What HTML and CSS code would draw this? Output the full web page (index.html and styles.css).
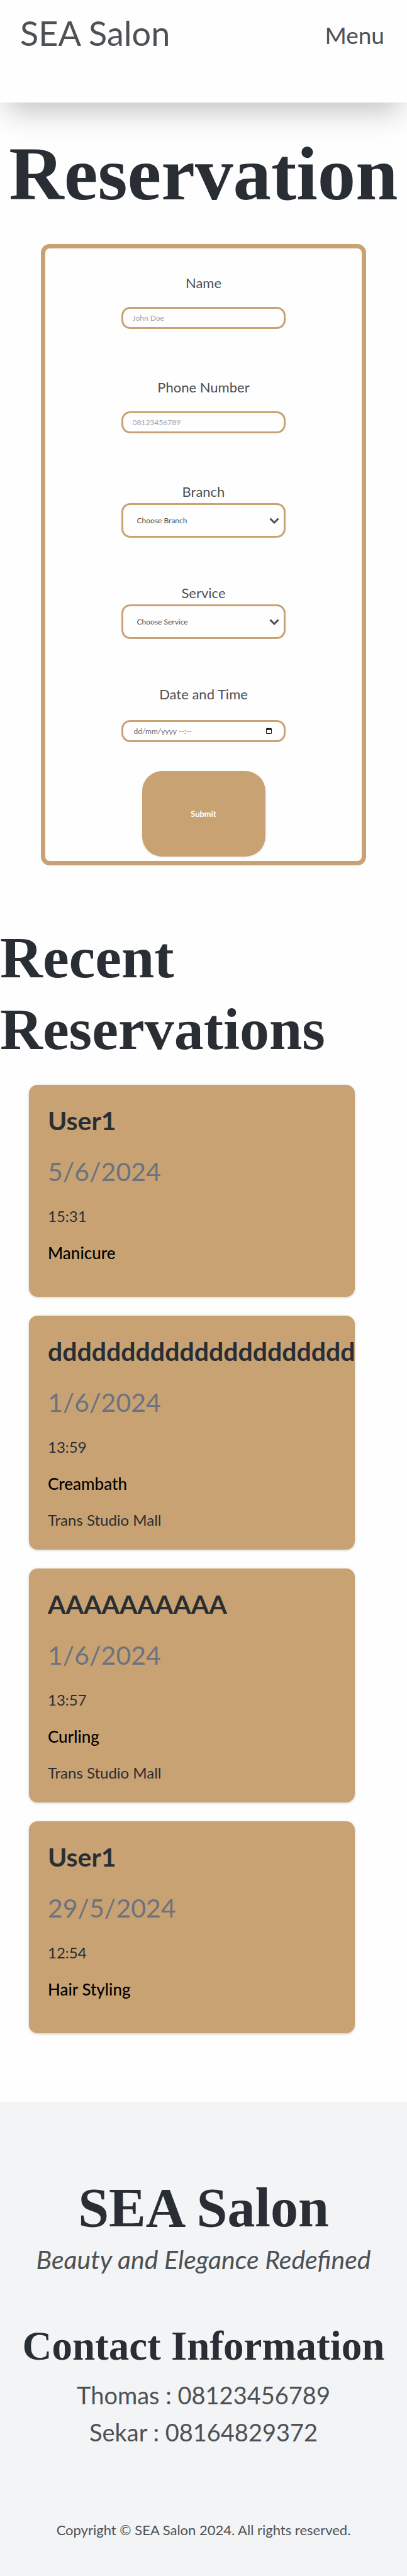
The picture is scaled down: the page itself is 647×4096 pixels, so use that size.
FILE: index.html
```html
<!DOCTYPE html>
<html lang="en">
<head>
<meta charset="utf-8">
<meta name="viewport" content="width=device-width, initial-scale=1">
<title>SEA Salon</title>
<link rel="stylesheet" href="styles.css">
</head>
<body>
<header class="navbar">
  <a class="brand" href="#">SEA Salon</a>
  <button class="menu" type="button">Menu</button>
</header>
<main>
  <h1 class="page-title">Reservation</h1>
  <form class="form">
    <div class="field">
      <label for="name">Name</label>
      <input class="input" id="name" type="text" placeholder="John Doe">
    </div>
    <div class="field">
      <label for="phone">Phone Number</label>
      <input class="input" id="phone" type="tel" placeholder="08123456789">
    </div>
    <div class="field field-select">
      <label for="branch">Branch</label>
      <div class="control">
        <select class="select" id="branch"><option>Choose Branch</option></select>
        <svg class="chevron" viewBox="0 0 16 10" aria-hidden="true"><path d="M1.500 1.500 8 8l6.500-6.500"/></svg>
      </div>
    </div>
    <div class="field field-select">
      <label for="service">Service</label>
      <div class="control">
        <select class="select" id="service"><option>Choose Service</option></select>
        <svg class="chevron" viewBox="0 0 16 10" aria-hidden="true"><path d="M1.500 1.500 8 8l6.500-6.500"/></svg>
      </div>
    </div>
    <div class="field field-date">
      <label for="date">Date and Time</label>
      <div class="control">
        <input class="input" id="date" type="text" placeholder="dd/mm/yyyy --:--">
        <svg class="calendar" viewBox="0 0 10 11" aria-hidden="true"><path fill-rule="evenodd" d="M1 1h1V0h1v1h4V0h1v1h1l1 1v8l-1 1H1l-1-1V2zM1 4v6h8V4z"/></svg>
      </div>
    </div>
    <button class="submit" type="submit">Submit</button>
  </form>

  <h2 class="section-title">Recent Reservations</h2>
  <div class="cards">
    <article class="card">
      <h3>User1</h3>
      <p class="date">5/6/2024</p>
      <p>15:31</p>
      <p class="service">Manicure</p>
      <p></p>
    </article>
    <article class="card">
      <h3>ddddddddddddddddddddddddd</h3>
      <p class="date">1/6/2024</p>
      <p>13:59</p>
      <p class="service">Creambath</p>
      <p>Trans Studio Mall</p>
    </article>
    <article class="card">
      <h3>AAAAAAAAAA</h3>
      <p class="date">1/6/2024</p>
      <p>13:57</p>
      <p class="service">Curling</p>
      <p>Trans Studio Mall</p>
    </article>
    <article class="card">
      <h3>User1</h3>
      <p class="date">29/5/2024</p>
      <p>12:54</p>
      <p class="service">Hair Styling</p>
      <p></p>
    </article>
  </div>
</main>
<footer class="footer">
  <h2 class="footer-brand">SEA Salon</h2>
  <p class="tagline">Beauty and Elegance Redefined</p>
  <h3 class="footer-heading">Contact Information</h3>
  <p class="contact">Thomas : 08123456789</p>
  <p class="contact">Sekar : 08164829372</p>
  <p class="copyright">Copyright © SEA Salon 2024. All rights reserved.</p>
</footer>
</body>
</html>
```
FILE: styles.css
```css
* {
  box-sizing: border-box;
  margin: 0;
}

:root {
  --tan: #c8a272;
  --ink: #292e35;
  --text: #4d5154;
  --sans: Lato, "Open Sans", sans-serif;
  --serif: "Liberation Serif", serif;
}

body {
  background: #fefefe;
  color: var(--text);
  font-family: var(--sans);
}

input,
select,
button {
  font-family: inherit;
  color: inherit;
}

h1,
h2,
.footer-heading {
  font-family: var(--serif);
  font-weight: 700;
  color: var(--ink);
}

.navbar {
  display: flex;
  justify-content: space-between;
  align-items: flex-start;
  height: 163px;
  padding: 18px 36px 18px 32px;
  background: #fefefe;
  box-shadow: 0 23px 45px -11px rgba(0, 0, 0, 0.25);
}

.brand {
  font-size: 54px;
  line-height: 70px;
  color: inherit;
  text-decoration: none;
}

.menu {
  padding: 0;
  border: 0;
  background: none;
  font-size: 37px;
  line-height: 76px;
}

.page-title {
  padding-top: 38px;
  font-size: 121px;
  line-height: 150px;
  text-align: center;
}

.form {
  display: flex;
  flex-direction: column;
  align-items: center;
  width: 80%;
  margin: 37px auto 0;
  padding: 39px 0 7px;
  border: 7px solid var(--tan);
  border-radius: 14px;
}

.field {
  display: flex;
  flex-direction: column;
  gap: 22px;
  width: 52%;
  margin-bottom: 77px;
}

.field label {
  font-size: 22px;
  line-height: 32px;
  text-align: center;
}

.field-select {
  gap: 2px;
  margin-bottom: 72px;
}

.field-date {
  gap: 25px;
  margin-bottom: 46px;
}

.control {
  position: relative;
  display: flex;
}

.input,
.select {
  width: 100%;
  border: 3px solid var(--tan);
  border-radius: 14px;
  background: transparent;
}

.input {
  height: 35px;
  padding: 0 15px;
  font-size: 12px;
}

.input::placeholder {
  color: #9ca3af;
  opacity: 1;
}

.field-date .input {
  padding: 0 17px;
}

.field-date .input::placeholder {
  color: #6b6e70;
}

.select {
  height: 55px;
  padding: 0 22px;
  font-size: 12px;
  appearance: none;
}

.chevron {
  position: absolute;
  top: 23px;
  right: 10px;
  width: 16px;
  fill: none;
  stroke: var(--text);
  stroke-width: 3;
}

.calendar {
  position: absolute;
  top: 12px;
  right: 22px;
  width: 9px;
}

.submit {
  width: 196px;
  height: 136px;
  border: 0;
  border-radius: 32px;
  background: var(--tan);
  box-shadow: 0 1px 3px rgba(0, 0, 0, 0.1);
  color: #fefefe;
  font-size: 13px;
  font-weight: 700;
}

.section-title {
  margin-top: 89px;
  font-size: 94px;
  line-height: 114px;
}

.cards {
  display: grid;
  gap: 30px;
  width: 80%;
  margin: 32px 0 109px 46px;
}

.card {
  padding: 32px 30px 18px;
  border-radius: 14px;
  background: var(--tan);
  box-shadow: 0 1px 4px rgba(0, 0, 0, 0.2);
  color: var(--ink);
  overflow: hidden;
  font-size: 24px;
  line-height: 58px;
}

.card h3 {
  font-size: 41px;
  line-height: 50px;
}

.card p:empty {
  height: 23px;
}

.card .date {
  margin: 21px 0 7px;
  font-size: 41px;
  line-height: 70px;
  color: #6b7280;
}

.card .service {
  color: #000;
  font-size: 26px;
  font-weight: 500;
}

.footer {
  padding: 119px 20px 58px;
  background: #f2f4f6;
  text-align: center;
}

.footer-brand {
  font-size: 88px;
  line-height: 100px;
}

.tagline {
  margin-top: 5px;
  font-size: 41px;
  font-style: italic;
  line-height: 54px;
}

.footer-heading {
  margin: 68px 0 7px;
  font-size: 65px;
  line-height: 84px;
}

.contact {
  font-size: 38px;
  line-height: 59px;
}

.copyright {
  margin-top: 111px;
  font-size: 22px;
  line-height: 30px;
}
```
